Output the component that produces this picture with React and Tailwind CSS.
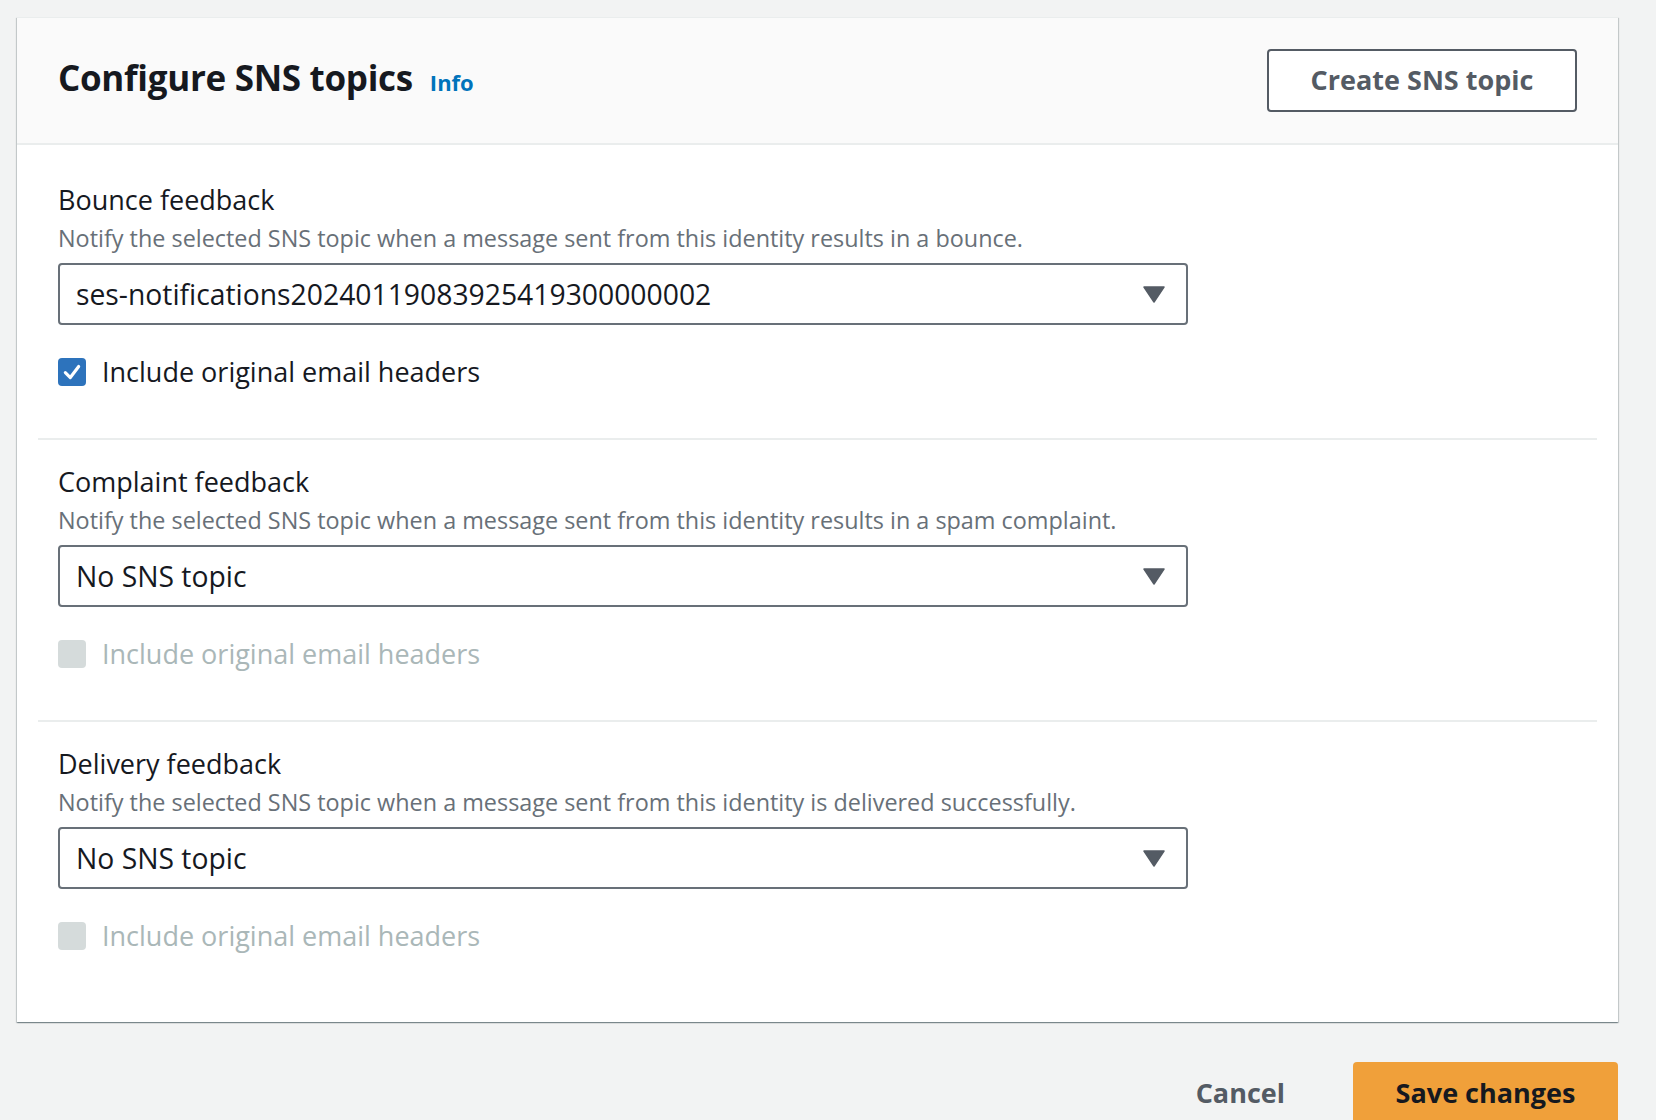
import React from 'react';

const font = { fontFamily: '"Open Sans", "Noto Sans", sans-serif' };

const Caret = () => (
  <svg width="22" height="17" viewBox="0 0 22 17" className="shrink-0">
    <path d="M1 1 H21 L11 16 Z" fill="#545b64" stroke="#545b64" strokeWidth="1.5" strokeLinejoin="round" />
  </svg>
);

const Checkbox = ({ checked, disabled }) => (
  <div
    className={`w-[28px] h-[28px] rounded-[4px] flex items-center justify-center shrink-0 ${
      disabled ? 'bg-[#d5dbdb]' : checked ? 'bg-[#2d73bc]' : 'bg-white border-2 border-[#687078]'
    }`}
  >
    {checked && (
      <svg width="20" height="20" viewBox="0 0 18 18">
        <polyline points="3,9.5 7.5,14 15,4" fill="none" stroke="white" strokeWidth="2.8" strokeLinecap="round" strokeLinejoin="round" />
      </svg>
    )}
  </div>
);

const Section = ({ title, desc, value, checked, disabled, last }) => (
  <div className={`pl-[20px] pr-[19px] pt-[25px] ${last ? 'pb-[49px]' : 'pb-[49px] border-b-2 border-[#eaeded]'}`}>
    <div className="text-[27px] leading-[34px] text-[#16191f]">{title}</div>
    <div className="mt-[6px] text-[23.4px] leading-[30px] text-[#687078]">{desc}</div>
    <div className="mt-[10px] w-[1130px] h-[62px] border-2 border-[#687078] rounded-[4px] bg-white flex items-center justify-between pl-[16px] pr-[21px]">
      <span className="text-[28.3px] text-[#16191f]">{value}</span>
      <Caret />
    </div>
    <div className="mt-[30px] h-[34px] flex items-center gap-[16px]">
      <Checkbox checked={checked} disabled={disabled} />
      <span className={`text-[27px] leading-[34px] ${disabled ? 'text-[#aab7b8]' : 'text-[#16191f]'}`}>
        Include original email headers
      </span>
    </div>
  </div>
);

export default function App() {
  return (
    <div className="min-h-[1120px] bg-[#f2f3f3] pt-[17px] pl-[17px] overflow-hidden" style={font}>
      <div className="w-[1601px] bg-white border-t border-[#eaeded] shadow-[0_1px_1px_0_rgba(0,28,36,0.3),1px_1px_1px_0_rgba(0,28,36,0.15),-1px_1px_1px_0_rgba(0,28,36,0.15)]">
        <div className="h-[127px] bg-[#fafafa] border-b-2 border-[#eaeded] flex items-center justify-between pl-[41px] pr-[41px]">
          <div className="flex items-baseline gap-[17px] -mt-[4px]">
            <h1 className="text-[35px] font-bold text-[#16191f] tracking-[-0.3px]">Configure SNS topics</h1>
            <a className="text-[22px] font-bold text-[#0073bb]">Info</a>
          </div>
          <button className="w-[310px] h-[63px] border-2 border-[#545b64] rounded-[4px] bg-white text-[27px] font-bold text-[#545b64]">
            Create SNS topic
          </button>
        </div>
        <div className="px-[21px] pt-[13px] pb-[20px]">
          <Section
            title="Bounce feedback"
            desc="Notify the selected SNS topic when a message sent from this identity results in a bounce."
            value="ses-notifications20240119083925419300000002"
            checked
          />
          <Section
            title="Complaint feedback"
            desc="Notify the selected SNS topic when a message sent from this identity results in a spam complaint."
            value="No SNS topic"
            disabled
          />
          <Section
            title="Delivery feedback"
            desc="Notify the selected SNS topic when a message sent from this identity is delivered successfully."
            value="No SNS topic"
            disabled
            last
          />
        </div>
      </div>
      <div className="w-[1601px] mt-[40px] flex justify-end items-start gap-[44px]">
        <button className="h-[62px] px-[24px] text-[27px] font-bold text-[#545b64]">Cancel</button>
        <button className="w-[265px] h-[62px] bg-[#f0a03a] rounded-[4px] text-[27px] font-bold text-[#16191f]">
          Save changes
        </button>
      </div>
    </div>
  );
}
